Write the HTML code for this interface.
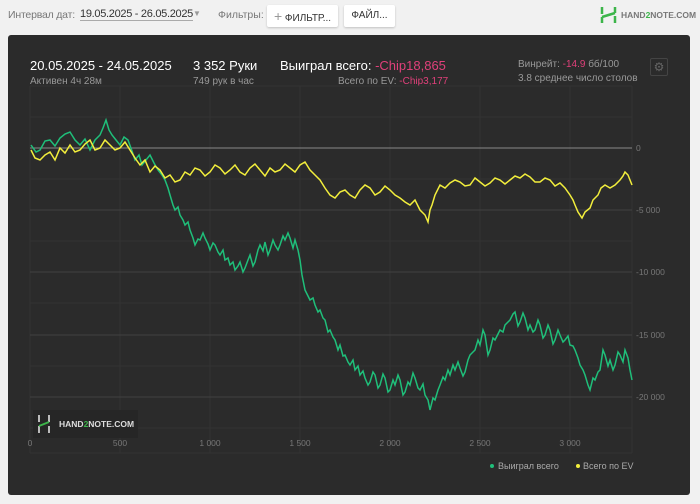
<!DOCTYPE html>
<html><head><meta charset="utf-8"><style>
*{margin:0;padding:0;box-sizing:border-box}
body{width:700px;height:504px;background:#f1f1f1;font-family:"Liberation Sans",sans-serif;position:relative;overflow:hidden}
.t{position:absolute;white-space:nowrap}
.btn{position:absolute;background:#fff;border-radius:2px;box-shadow:0 1px 2px rgba(0,0,0,.2);font-size:10px;color:#333;height:22px;line-height:22px;text-align:center}
.panel{position:absolute;left:8px;top:35px;width:682px;height:460px;background:#2b2b2b;border-radius:3px}
.red{color:#e0407a}
</style></head><body>
<div class="t" style="left:8px;top:9px;font-size:10.5px;color:#777;letter-spacing:-0.2px">Интервал дат:</div>
<div class="t" style="left:80px;top:8px;font-size:11px;color:#333;border-bottom:1px solid #aaa;letter-spacing:-0.3px">19.05.2025 - 26.05.2025</div>
<div class="t" style="left:193px;top:9px;font-size:8px;color:#999">▼</div>
<div class="t" style="left:218px;top:9px;font-size:10.5px;color:#777">Фильтры:</div>
<div class="btn" style="left:267px;top:5px;width:71px"><span style="color:#999;font-size:14px">+</span> ФИЛЬТР...</div>
<div class="btn" style="left:344px;top:5px;width:51px">ФАЙЛ...</div>
<svg class="t" style="left:600px;top:6px" width="18" height="18"><path d="M2 1v7M2 11v6M15 1v6M15 10v7M2 11l13-4" stroke="#3cb54a" stroke-width="2.5" fill="none"/></svg>
<div class="t" style="left:621px;top:10px;font-size:8.5px;color:#777;font-weight:bold">HAND<span style="color:#3cb54a">2</span>NOTE.COM</div>
<div class="panel">
<div class="t" style="left:22px;top:23px;font-size:13px;color:#fff">20.05.2025 - 24.05.2025</div>
<div class="t" style="left:22px;top:41px;font-size:10px;color:#999">Активен 4ч 28м</div>
<div class="t" style="left:185px;top:23px;font-size:13px;color:#fff">3 352 Руки</div>
<div class="t" style="left:185px;top:41px;font-size:10px;color:#999">749 рук в час</div>
<div class="t" style="left:272px;top:23px;font-size:13px;color:#fff">Выиграл всего: <span class="red">-Chip18,865</span></div>
<div class="t" style="left:330px;top:41px;font-size:10px;color:#999">Всего по EV: <span class="red">-Chip3,177</span></div>
<div class="t" style="left:510px;top:24px;font-size:10px;color:#999">Винрейт: <span class="red">-14.9</span> бб/100</div>
<div class="t" style="left:510px;top:38px;font-size:10px;color:#999">3.8 среднее число столов</div>
<div class="t" style="left:642px;top:23px;width:18px;height:18px;border:1px solid #444;border-radius:2px;color:#666;font-size:12px;text-align:center;line-height:16px">⚙</div>
</div>
<svg class="t" style="left:0;top:0" width="700" height="504">
<g stroke="#333" stroke-width="1">
<path d="M30 86H632M30 117H632M30 179H632M30 241H632M30 303H632M30 366H632M30 428H632M30 453H632"/>
<path d="M30 86V453M120 86V453M210 86V453M300 86V453M390 86V453M480 86V453M570 86V453M632 86V453"/>
</g>
<g stroke="#3d3d3d" stroke-width="1.2"><path d="M30 210H632M30 272H632M30 335H632M30 397H632"/></g>
<path d="M30 148H632" stroke="#888" stroke-width="1"/>
<g font-size="8.5" fill="#777" font-family="Liberation Sans">
<text x="636" y="151">0</text><text x="636" y="213">-5 000</text><text x="636" y="275">-10 000</text><text x="636" y="338">-15 000</text><text x="636" y="400">-20 000</text>
<g text-anchor="middle"><text x="30" y="446">0</text><text x="120" y="446">500</text><text x="210" y="446">1 000</text><text x="300" y="446">1 500</text><text x="390" y="446">2 000</text><text x="480" y="446">2 500</text><text x="570" y="446">3 000</text></g>
</g>
<polyline fill="none" stroke="#1fbf7a" stroke-width="1.5" points="31,145 36,152 40,150 45,141 50,140 55,146 60,138 65,134 70,132 75,140 80,145 85,139 90,150 95,140 100,135 103,128 106,120 109,130 112,135 116,140 120,145 124,137 128,140 132,151 135,160 139,155 142,165 146,160 150,155 154,163 158,170 162,175 165,180 168,188 170,195 173,205 175,210 178,207 180,215 183,220 185,225 188,222 190,230 193,238 195,245 198,239 200,240 203,233 205,238 208,244 210,250 213,243 215,245 218,252 220,255 223,250 225,260 228,258 230,265 233,262 235,270 238,266 240,262 243,272 245,268 248,260 250,255 253,266 255,262 258,250 260,245 263,251 265,242 268,255 270,250 273,240 275,245 278,250 280,245 283,236 285,240 288,233 290,238 293,248 295,240 298,250 300,260 302,275 305,290 308,296 310,300 313,298 315,305 318,312 320,310 323,318 325,320 328,332 330,330 333,337 335,340 338,350 340,345 343,356 345,355 348,362 350,365 353,360 355,370 358,366 360,375 363,371 365,378 368,385 370,382 373,372 375,375 378,388 380,385 383,374 385,378 388,392 390,390 393,380 395,385 398,375 400,380 403,395 405,392 408,382 410,385 413,373 415,378 418,388 420,390 423,384 425,395 428,400 430,410 433,398 435,400 438,390 440,385 443,377 445,380 448,370 450,375 453,365 455,370 458,362 460,368 463,376 465,372 468,360 470,355 473,352 475,350 478,340 480,345 483,330 485,335 488,355 490,350 493,338 495,340 498,334 500,330 503,332 505,325 508,322 510,320 513,314 515,312 518,326 520,322 523,313 525,318 528,330 530,325 533,332 535,330 538,320 540,325 543,338 545,335 548,325 550,330 553,344 555,340 558,330 560,335 563,342 565,340 568,336 570,345 573,346 575,350 578,358 580,365 583,370 585,375 588,385 590,390 593,378 595,380 598,372 600,370 603,350 605,355 608,366 610,360 613,370 615,365 618,352 620,355 623,362 625,350 628,358 630,370 632,380"/>
<polyline fill="none" stroke="#f2ee3c" stroke-width="1.5" points="31,150 35,158 40,160 45,155 50,152 55,160 60,148 65,153 70,145 75,152 80,150 85,144 90,140 95,150 100,148 105,140 110,145 115,150 120,148 125,142 130,150 135,158 140,165 145,160 150,172 155,166 160,170 165,178 170,175 175,182 180,180 185,172 190,175 195,168 200,170 205,176 210,172 215,165 220,168 225,174 230,170 235,165 240,172 245,175 250,168 255,164 260,170 265,176 270,168 275,172 280,170 285,164 290,168 295,172 300,165 305,162 310,170 315,175 320,180 325,188 330,195 335,198 340,192 345,190 350,195 355,198 360,190 365,185 370,188 375,195 380,192 385,186 390,190 395,195 400,198 405,202 410,205 415,200 420,210 425,215 428,222 430,210 432,205 435,195 440,185 445,188 450,183 455,180 460,182 465,186 470,185 475,178 480,182 485,186 490,183 495,178 500,180 505,184 510,180 515,176 520,178 525,174 530,177 535,182 540,182 545,178 550,180 555,186 560,183 565,188 570,195 573,200 575,205 578,212 582,218 585,212 590,208 593,200 598,195 601,188 605,185 610,188 615,185 620,180 623,176 625,172 628,175 632,185"/>
<rect x="33" y="410" width="105" height="28" fill="#262626"/>
<path d="M39 415v7M39 426v7M49 415v7M49 426v7" stroke="#ccc" stroke-width="1.8" fill="none"/>
<path d="M39 426l10-4" stroke="#3cb54a" stroke-width="2"/>
<text x="59" y="427" font-size="8.5" fill="#ddd" font-weight="bold" font-family="Liberation Sans">HAND<tspan fill="#3cb54a">2</tspan>NOTE.COM</text>
<circle cx="492" cy="466" r="2" fill="#1fbf7a"/>
<text x="498" y="469" font-size="9" fill="#aaa" font-family="Liberation Sans">Выиграл всего</text>
<circle cx="578" cy="466" r="2" fill="#f2ee3c"/>
<text x="583" y="469" font-size="9" fill="#aaa" font-family="Liberation Sans">Всего по EV</text>
</svg>
</body></html>
